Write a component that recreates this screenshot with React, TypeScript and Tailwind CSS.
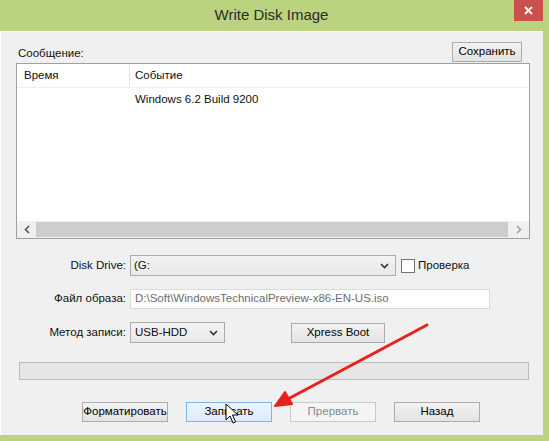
import React from 'react';

const font = { fontFamily: '"Liberation Sans", Arial, sans-serif' };

function Chevron() {
  return (
    <svg width="9" height="6" viewBox="0 0 9 6" className="shrink-0">
      <path d="M1 1 L4.5 4.5 L8 1" fill="none" stroke="#333" strokeWidth="1.6" />
    </svg>
  );
}

function WinButton({ label, w, state }: { label: string; w: string; state?: 'hover' | 'disabled' }) {
  const look =
    state === 'hover'
      ? 'border-[#7eb4ea] bg-[linear-gradient(#ecf4fc,#dcecfc)] text-black'
      : state === 'disabled'
      ? 'border-[#c9c9c9] bg-[#f4f4f4] text-[#8b8b8b]'
      : 'border-[#acacac] bg-[linear-gradient(#f2f2f2,#e3e3e3)] text-black';
  return (
    <div className={`${w} h-[20px] border flex items-center justify-center text-[11.5px] leading-none ${look}`}>
      {label}
    </div>
  );
}

export default function App() {
  return (
    <div className="relative w-[549px] h-[441px] bg-[#bad37f] flex flex-col overflow-hidden" style={font}>
      {/* Title bar */}
      <div className="relative h-[31px] shrink-0 flex items-center justify-center">
        <span className="text-[15px] text-[#2b2b2b] pr-[6px]">Write Disk Image</span>
        <div className="absolute top-0 left-[514px] w-[29px] h-[21px] bg-[#c9504d] flex items-center justify-center">
          <svg width="9" height="9" viewBox="0 0 9 9">
            <path d="M1 1 L8 8 M8 1 L1 8" stroke="#fff" strokeWidth="1.8" />
          </svg>
        </div>
      </div>

      {/* Client area */}
      <div className="flex-1 mr-[6px] mb-[6px] bg-[#f0f0f0] border-t border-l border-white flex flex-col text-[11.5px] text-[#111]">
        <div className="flex items-end justify-between pl-[17px] pr-[21px] pt-[9px] h-[31px]">
          <span className="pb-[1px]">Сообщение:</span>
          <div className="pb-[1px]">
            <WinButton label="Сохранить" w="w-[70px]" />
          </div>
        </div>

        {/* List view */}
        <div className="ml-[15px] mr-[13px] h-[176px] border border-[#a0a0a0] bg-white flex flex-col">
          <div className="h-[24px] flex items-center border-b border-[#f0f0f0]">
            <span className="w-[113px] pl-[7px] border-r border-[#e5e5e5] h-full flex items-center">Время</span>
            <span className="pl-[5px]">Событие</span>
          </div>
          <div className="flex-1 pt-[3px] pl-[118px]">Windows 6.2 Build 9200</div>
          <div className="h-[17px] flex items-center bg-[#f0f0f0]">
            <div className="w-[19px] flex items-center justify-center">
              <svg width="6" height="9" viewBox="0 0 6 9">
                <path d="M5 1 L1.5 4.5 L5 8" fill="none" stroke="#555" strokeWidth="1.6" />
              </svg>
            </div>
            <div className="flex-1 h-[15px] bg-[#cdcdcd]" />
            <div className="w-[21px] flex items-center justify-center">
              <svg width="6" height="9" viewBox="0 0 6 9">
                <path d="M1 1 L4.5 4.5 L1 8" fill="none" stroke="#a0a0a0" strokeWidth="1.6" />
              </svg>
            </div>
          </div>
        </div>

        {/* Form rows */}
        <div className="mt-[16px] flex flex-col gap-[13px] pl-[15px]">
          <div className="flex items-center h-[21px]">
            <span className="w-[110px] text-right">Disk Drive:</span>
            <div className="ml-[4px] w-[266px] h-[21px] border border-[#acacac] bg-[linear-gradient(#f3f3f3,#e8e8e8)] flex items-center justify-between pl-[3px] pr-[6px]">
              <span>(G:</span>
              <Chevron />
            </div>
            <div className="ml-[5px] w-[14px] h-[14px] border border-[#707070] bg-white" />
            <span className="ml-[3px]">Проверка</span>
          </div>
          <div className="flex items-center h-[20px]">
            <span className="w-[110px] text-right">Файл образа:</span>
            <div className="ml-[4px] w-[360px] h-[20px] border border-[#d9d9d9] bg-white flex items-center pl-[4px] text-[#6d6d6d]">
              D:\Soft\WindowsTechnicalPreview-x86-EN-US.iso
            </div>
          </div>
          <div className="flex items-center h-[21px]">
            <span className="w-[110px] text-right">Метод записи:</span>
            <div className="ml-[4px] w-[95px] h-[21px] border border-[#acacac] bg-[linear-gradient(#f3f3f3,#e8e8e8)] flex items-center justify-between pl-[4px] pr-[6px]">
              <span>USB-HDD</span>
              <Chevron />
            </div>
            <div className="ml-[66px]">
              <WinButton label="Xpress Boot" w="w-[94px]" />
            </div>
          </div>
        </div>

        {/* Progress bar */}
        <div className="mt-[19px] ml-[18px] mr-[14px] h-[18px] border border-[#bcbcbc] bg-[#e6e6e6]" />

        {/* Bottom buttons */}
        <div className="mt-[22px] flex gap-[18px] pl-[81px]">
          <WinButton label="Форматировать" w="w-[86px]" />
          <WinButton label="Записать" w="w-[86px]" state="hover" />
          <WinButton label="Прервать" w="w-[86px]" state="disabled" />
          <WinButton label="Назад" w="w-[86px]" />
        </div>
      </div>

      {/* Annotation arrow and mouse cursor drawn over the dialog */}
      <svg className="absolute inset-0 pointer-events-none" width="549" height="441" viewBox="0 0 549 441">
        <line x1="427" y1="325" x2="288" y2="399" stroke="#e8211d" strokeWidth="3" strokeLinecap="round" />
        <path d="M275 406 L285 392 L292 404 Z" fill="#e8211d" stroke="#e8211d" strokeWidth="2" strokeLinejoin="round" />
        <path
          d="M226 404 L226 420 L230 416 L233 423 L235.5 422 L232.5 415 L238 415 Z"
          fill="#fff"
          stroke="#000"
          strokeWidth="1"
          strokeLinejoin="round"
        />
      </svg>
    </div>
  );
}
